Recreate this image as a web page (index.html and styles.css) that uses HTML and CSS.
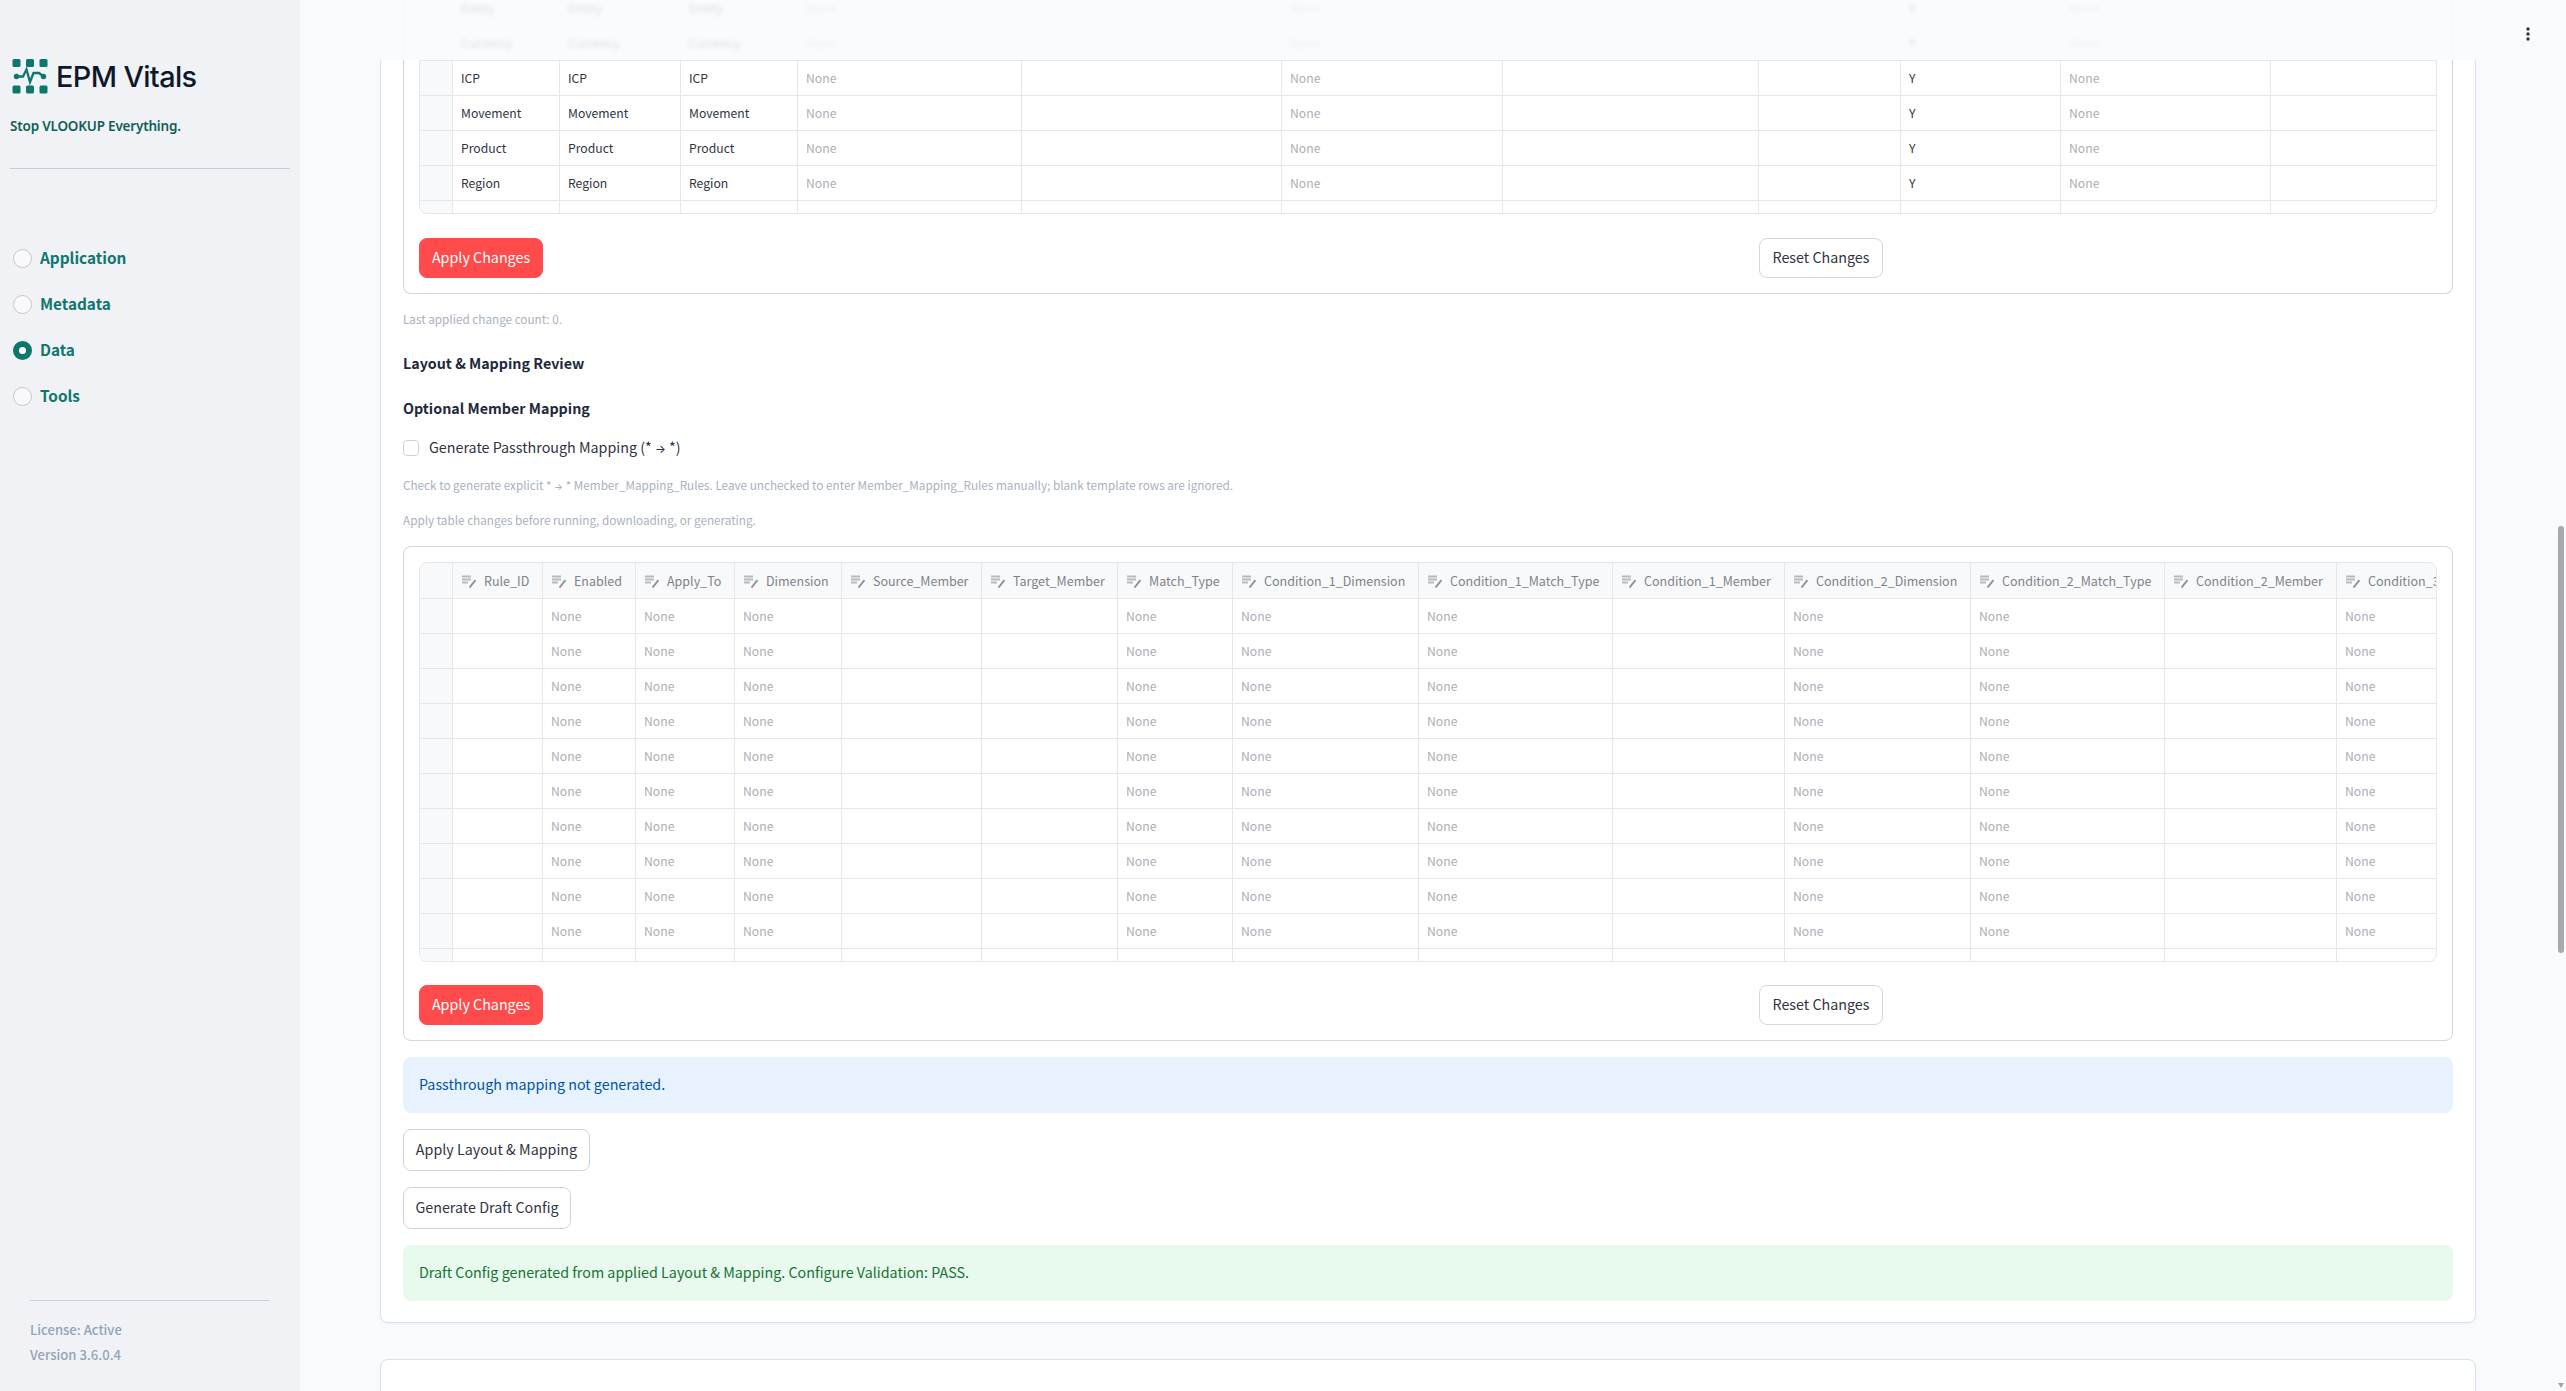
FILE: index.html
```html
<!DOCTYPE html>
<html lang="en">
<head>
  <meta charset="UTF-8">
  <title>EPM Vitals</title>
  <link rel="stylesheet" href="styles.css">
</head>
<body>

<aside class="sidebar">
  <div class="logo">
    <svg width="36" height="36" viewBox="0 0 36 36" fill="#0f766e">
      <rect x="0.5" y="1" width="8" height="8" rx="1.5"/>
      <rect x="14" y="1" width="8" height="8" rx="1.5"/>
      <rect x="27.5" y="1" width="8" height="8" rx="1.5"/>
      <rect x="0.5" y="27.5" width="8" height="8" rx="1.5"/>
      <rect x="14" y="27.5" width="8" height="8" rx="1.5"/>
      <rect x="27.5" y="27.5" width="8" height="8" rx="1.5"/>
      <circle cx="4.500" cy="18.500" r="2.7"/>
      <circle cx="31.500" cy="18.500" r="2.7"/>
      <path d="M4 18.500H11L14.500 11.500L18 24L21.500 15H27L31 18" fill="none" stroke="#0f766e" stroke-width="2.300"/>
    </svg>
    <span class="logo-text">EPM Vitals</span>
  </div>
  <p class="tagline"><span>Stop VLOOKUP Everything.</span></p>
  <nav>
    <a href="#"><i></i><span>Application</span></a>
    <a href="#"><i></i><span>Metadata</span></a>
    <a href="#" class="selected"><i></i><span>Data</span></a>
    <a href="#"><i></i><span>Tools</span></a>
  </nav>
  <div class="license">
    <div>License: Active</div>
    <div>Version 3.6.0.4</div>
  </div>
</aside>

<main>
  <section class="card first">
    <div class="form top-form">
      <div class="grid dims" id="dimGrid"></div>
      <div class="buttons">
        <button class="btn primary">Apply Changes</button>
        <button class="btn">Reset Changes</button>
      </div>
    </div>
    <p class="caption">Last applied change count: 0.</p>
    <h4>Layout &amp; Mapping Review</h4>
    <h4>Optional Member Mapping</h4>
    <label class="check"><i></i><span>Generate Passthrough Mapping (* <b class="arrow">→</b> *)</span></label>
    <p class="caption">Check to generate explicit * <b class="arrow">→</b> * Member_Mapping_Rules. Leave unchecked to enter Member_Mapping_Rules manually; blank template rows are ignored.</p>
    <p class="caption">Apply table changes before running, downloading, or generating.</p>
    <div class="form">
      <div class="grid rules" id="ruleGrid"></div>
      <div class="buttons">
        <button class="btn primary">Apply Changes</button>
        <button class="btn">Reset Changes</button>
      </div>
    </div>
    <div class="alert info">Passthrough mapping not generated.</div>
    <button class="btn tall layout-btn">Apply Layout &amp; Mapping</button>
    <button class="btn tall draft-btn">Generate Draft Config</button>
    <div class="alert success">Draft Config generated from applied Layout &amp; Mapping. Configure Validation: PASS.</div>
  </section>
  <section class="card next"></section>
</main>

<header>
  <svg width="6" height="16" viewBox="0 0 6 16" fill="#31333f">
    <circle cx="3" cy="3" r="1.700"/><circle cx="3" cy="8" r="1.700"/><circle cx="3" cy="13" r="1.700"/>
  </svg>
</header>
<div class="scrollbar"><div class="thumb"></div><div class="down"></div></div>

<script>
  const icon = '<svg width="14" height="14" viewBox="0 0 14 14"><path d="M0 2.500H9M0 5.500H9M0 8.500H6" stroke="#b9bac0" stroke-width="2"/><path d="M7.500 13.500L13.500 6" stroke="#8f9199" stroke-width="1.900"/></svg>';

  function addRow(grid, cells, cls) {
    const row = document.createElement("div");
    row.className = "row " + (cls || "");
    row.innerHTML = '<div class="cell marker"></div>' + cells.map(c =>
      `<div class="cell ${c === "None" ? "none" : ""}">${cls === "head" ? icon : ""}<span>${c}</span></div>`).join("");
    grid.appendChild(row);
  }

  const dimGrid = document.getElementById("dimGrid");
  ["Entity", "Currency", "ICP", "Movement", "Product", "Region"].forEach(d =>
    addRow(dimGrid, [d, d, d, "None", "", "None", "", "", "Y", "None", ""]));
  addRow(dimGrid, Array(11).fill(""), "last");

  const columns = ["Rule_ID", "Enabled", "Apply_To", "Dimension", "Source_Member", "Target_Member", "Match_Type",
    "Condition_1_Dimension", "Condition_1_Match_Type", "Condition_1_Member",
    "Condition_2_Dimension", "Condition_2_Match_Type", "Condition_2_Member", "Condition_3_Dimension"];
  const textColumns = ["Rule_ID", "Source_Member", "Target_Member", "Condition_1_Member", "Condition_2_Member"];
  const ruleGrid = document.getElementById("ruleGrid");
  addRow(ruleGrid, columns, "head");
  for (let i = 0; i < 10; i++) {
    addRow(ruleGrid, columns.map(c => textColumns.includes(c) ? "" : "None"));
  }
  addRow(ruleGrid, columns.map(() => ""), "last");
</script>

</body>
</html>
```

FILE: styles.css
```css
* {
  box-sizing: border-box;
}
body {
  margin: 0;
  height: 1391px;
  overflow: hidden;
  display: flex;
  background: #f8fafc;
  color: #31333f;
  font-family: "Noto Sans CJK SC", sans-serif;
  font-size: 14.3px;
}
p, h4 {
  margin: 0;
}
.sidebar {
  width: 300px;
  height: 1391px;
  background: #f0f2f6;
  display: flex;
  flex-direction: column;
  padding: 58px 10px 0;
  flex-shrink: 0;
}
.logo {
  display: flex;
  align-items: center;
  height: 36px;
  gap: 8px;
  padding-left: 2px;
}
.logo-text {
  font-family: Inter, sans-serif;
  font-size: 28.8px;
  font-weight: 550;
  letter-spacing: -0.6px;
  color: #0f172a;
  white-space: nowrap;
}
.tagline {
  margin-top: 22px;
  height: 53px;
  line-height: 20px;
  border-bottom: 1px solid #cacbd1;
  font-family: "Noto Sans", sans-serif;
  font-size: 13.5px;
  font-weight: 600;
  letter-spacing: -0.2px;
  color: #115e59;
}
nav {
  margin-top: 67px;
}
nav a {
  display: flex;
  align-items: center;
  height: 45.8px;
  padding-left: 3px;
  gap: 8px;
  text-decoration: none;
  font-weight: bold;
  font-size: 15.35px;
  color: #0f766e;
}
nav span {
  padding-bottom: 3px;
}
nav i {
  width: 19px;
  height: 19px;
  border-radius: 50%;
  border: 1px solid #c6c7ce;
  background: #f9f9fb;
}
nav .selected i {
  border: 6px solid #0f766e;
  background: white;
}
.license {
  margin: auto 20px 22px;
  border-top: 1px solid #c5d3e2;
  padding-top: 16px;
  height: 69px;
  line-height: 25px;
  font-size: 13.1px;
  font-weight: 500;
  color: #94a3b8;
}
main {
  flex: 1;
  min-width: 0;
  padding: 0 90px 0 80px;
  margin-top: -9px;
}
.card {
  background: white;
  border: 1px solid #d8e2ec;
  border-radius: 8px;
  padding: 0 22px;
  box-shadow: 0 1px 2px rgba(15, 23, 42, 0.05);
}
.card.first {
  border-top: none;
  border-radius: 0 0 8px 8px;
  height: 1332px;
}
.card.next {
  height: 60px;
  margin-top: 36px;
}
.form {
  border: 1px solid #d6d6d9;
  border-radius: 8px;
  padding: 15px;
  height: 495px;
}
.form.top-form {
  border-top: none;
  border-radius: 0 0 8px 8px;
  padding-top: 0;
  height: 303px;
}
.grid {
  border: 1px solid #e7e7ea;
  border-radius: 8px;
  overflow: hidden;
  font-size: 12.2px;
  height: 400px;
}
.dims {
  border-top: none;
  border-radius: 0 0 8px 8px;
  height: 223px;
}
.row {
  display: grid;
  height: 35px;
}
.dims .row {
  grid-template-columns: 33px 107px 121px 117px 224px 260px 221px 256px 142px 160px 210px 1fr;
}
.rules .row {
  grid-template-columns: 33px 90px 93px 99px 107px 140px 136px 115px 186px 194px 172px 186px 194px 172px 200px;
}
.cell {
  border-right: 1px solid #e7e7ea;
  border-bottom: 1px solid #e7e7ea;
  padding-left: 8px;
  line-height: 34px;
  overflow: hidden;
  white-space: nowrap;
}
.dims .cell:last-child {
  border-right: none;
}
.marker, .head .cell {
  background: #f8f9fb;
}
.none {
  color: #adaeb5;
}
.head {
  height: 36px;
}
.head .cell {
  display: flex;
  align-items: center;
  gap: 8px;
  padding-left: 9px;
  font-size: 12.5px;
  color: #808289;
}
.head svg {
  flex-shrink: 0;
}
.buttons {
  display: grid;
  grid-template-columns: 1340px 1fr;
  margin-top: 24px;
}
.rules + .buttons {
  margin-top: 23px;
}
.btn {
  width: 124px;
  height: 40px;
  padding: 0 0 3px;
  border: 1px solid #d6d6d9;
  border-radius: 8px;
  background: white;
  color: #31333f;
  font: inherit;
  white-space: nowrap;
}
.btn.primary {
  background: #ff4b4b;
  border-color: #ff4b4b;
  color: white;
}
.btn.tall {
  display: block;
  height: 42px;
  margin-top: 16px;
  border-color: #cbd5e1;
}
.layout-btn {
  width: 187px;
}
.draft-btn {
  width: 168px;
}
.caption {
  height: 20px;
  line-height: 18px;
  margin-top: 15px;
  font-size: 11.73px;
  color: #a9b1be;
}
.form + .caption {
  margin-top: 16px;
}
h4 {
  height: 24px;
  line-height: 24px;
  margin-top: 21px;
  color: #1e293b;
  font-size: 14.3px;
}
.check {
  display: flex;
  align-items: center;
  gap: 10px;
  height: 24px;
  margin: 16px 0;
}
.check i {
  width: 16px;
  height: 16px;
  border: 1px solid #d0d1d6;
  border-radius: 4px;
}
.check span {
  padding-bottom: 3px;
}
.arrow {
  font-family: Inter, sans-serif;
  font-weight: 500;
  font-size: 0.8em;
}
.caption + .form {
  margin-top: 15px;
}
.alert {
  height: 56px;
  line-height: 54px;
  margin-top: 16px;
  padding-left: 16px;
  border-radius: 8px;
}
.info {
  background: #e8f2ff;
  color: #0054a3;
}
.success {
  background: #e8f9ee;
  color: #177233;
}
header {
  position: fixed;
  top: 0;
  left: 300px;
  right: 0;
  height: 60px;
  background: rgba(248, 250, 252, 0.85);
  backdrop-filter: blur(2px);
  display: flex;
  justify-content: flex-end;
  padding: 26px 35px 0 0;
}
.scrollbar {
  position: fixed;
  top: 526px;
  right: 2px;
  width: 6px;
}
.thumb {
  height: 427px;
  border-radius: 3px;
  background: #a8a9b0;
}
.down {
  margin-top: 430px;
  border: 3px solid transparent;
  border-top: 5px solid #a3a4ab;
}
```
